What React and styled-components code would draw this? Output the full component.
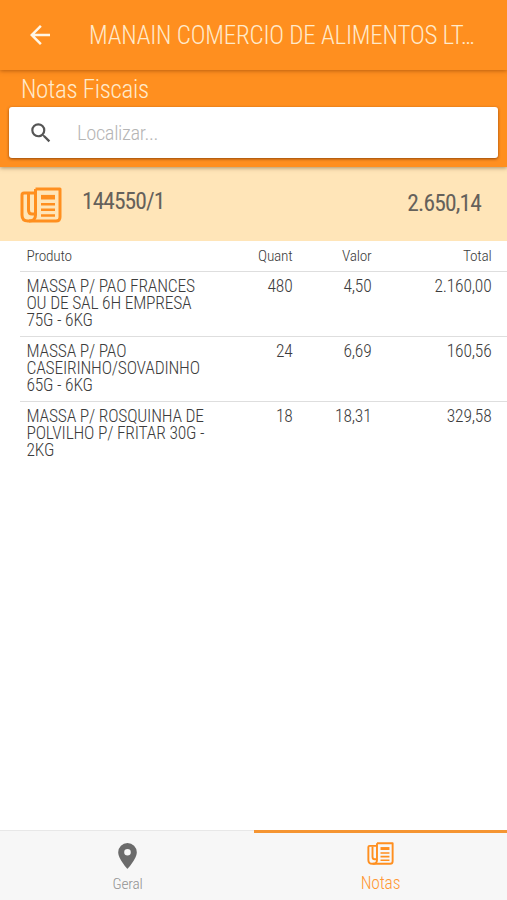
import styled, { createGlobalStyle } from "styled-components";

const GlobalStyle = createGlobalStyle`
    * {
        box-sizing: border-box;
    }

    body {
        margin: 0;
        background: #fff;
        font-family: "Roboto Condensed", Roboto, "Liberation Sans Narrow", sans-serif;
        font-stretch: 75%;
        font-weight: 300;
        color: #3c3c3c;
    }
`

const Screen = styled('div')`
    height: 900px;
    display: flex;
    flex-direction: column;
    overflow: hidden;
`

const TopBar = styled('header')`
    position: relative;
    z-index: 2;
    display: flex;
    align-items: center;
    height: 70px;
    flex-shrink: 0;
    padding-left: 25px;
    background: #ff8f1f;
    box-shadow: 0 1px 4px rgba(120, 50, 0, 0.5);
    color: #ffeacb;

    svg {
        width: 30px;
        height: 30px;
        fill: #fff6e6;
    }
`

const Title = styled('h1')`
    margin: 2px 0 0 34px;
    font-size: 25px;
    font-weight: 300;
    letter-spacing: -0.2px;
    line-height: 30px;
    white-space: nowrap;
`

const SearchArea = styled('section')`
    position: relative;
    height: 97px;
    flex-shrink: 0;
    padding: 5px 9px 0;
    background: #ff8f1f;
    box-shadow: 0 1px 4px rgba(90, 60, 20, 0.5);
`

const Subtitle = styled('h2')`
    margin: 0 0 3px 12px;
    font-size: 25px;
    font-weight: 300;
    letter-spacing: -0.3px;
    line-height: 29px;
    color: #ffeacb;
`

const SearchBox = styled('label')`
    display: flex;
    align-items: center;
    height: 51px;
    padding-left: 19px;
    border-radius: 3px;
    background: #fff;
    box-shadow: 0 1px 3px rgba(100, 40, 0, 0.7);

    svg {
        width: 26px;
        height: 26px;
        fill: #555;
    }

    input {
        flex: 1;
        margin-left: 23px;
        padding: 0;
        border: none;
        outline: none;
        font: inherit;
        font-size: 20.5px;
        letter-spacing: -0.35px;
    }

    input::placeholder {
        color: #b5b5b5;
    }
`

const Invoice = styled('div')`
    display: flex;
    height: 74px;
    flex-shrink: 0;
    padding: 20px 25px 0 20px;
    background: #ffe5b8;
    color: #65615b;
    font-size: 23.5px;
    font-weight: 400;
    letter-spacing: -0.95px;
    line-height: 28px;
`

const InvoiceNumber = styled('span')`
    margin-left: 20px;
`

const InvoiceTotal = styled('span')`
    margin: 2px 1px 0 auto;
    letter-spacing: -0.85px;
`

const Row = styled('div')`
    display: grid;
    grid-template-columns: 186px 80px 79px 120px;
    height: ${p => p.$head ? '31px' : '65px'};
    margin-left: 20px;
    padding: ${p => p.$head ? '7px 0 0 6.5px' : '6px 0 0 6.5px'};
    border-bottom: ${p => p.$last ? 'none' : '1px solid #dedede'};
    font-size: ${p => p.$head ? '15.4px' : '17.5px'};
    letter-spacing: ${p => p.$head ? '-0.25px' : '-0.2px'};
    line-height: 17.1px;
`

const Cell = styled('span')`
    text-align: ${p => p.$right ? 'right' : 'left'};
`

const Tabs = styled('nav')`
    display: flex;
    height: 70px;
    flex-shrink: 0;
    margin-top: auto;
    background: #f7f7f7;
`

const Tab = styled('div')`
    flex: 1;
    display: flex;
    flex-direction: column;
    align-items: center;
    border-top: ${p => p.$active ? '3px solid #f59532' : '1px solid #e8e8e8'};
    padding-top: ${p => p.$active ? '5px' : '9px'};
    padding-left: ${p => p.$active ? '0' : '1px'};
    color: ${p => p.$active ? '#ff9733' : '#929292'};
    font-size: ${p => p.$active ? '17.5px' : '15.4px'};
    letter-spacing: -0.2px;
    line-height: 20px;
`

const TabIcon = styled('div')`
    display: flex;
    align-items: center;
    justify-content: center;
    height: 31px;
    margin-bottom: ${p => p.$gap};
`

function PaperIcon({ width, height, strokeWidth }) {
    return (
        <svg width={width} height={height} viewBox="0 0 42 36" fill="none" stroke="#ff8f1f" strokeWidth={strokeWidth} strokeLinejoin="round">
            <path d="M15.5 2H40V30Q40 34 36 34H8Q2 34 2 28V8Q2 6 4 6H15.5" />
            <path d="M15.5 2V28Q15.5 34 9 34" />
            <path d="M8.5 7V23Q8.5 27 12 27H15" />
            <path d="M21 10.2H35" strokeWidth="4.6" />
            <path d="M21 17.2H35M21 22.8H35M21 28.5H35" strokeWidth="2.6" />
        </svg>
    )
}

const items = [
    { name: 'MASSA P/ PAO FRANCES OU DE SAL 6H EMPRESA 75G - 6KG', quant: '480', valor: '4,50', total: '2.160,00' },
    { name: 'MASSA P/ PAO CASEIRINHO/SOVADINHO 65G - 6KG', quant: '24', valor: '6,69', total: '160,56' },
    { name: 'MASSA P/ ROSQUINHA DE POLVILHO P/ FRITAR 30G - 2KG', quant: '18', valor: '18,31', total: '329,58' },
]

export default function App() {
    return (
        <Screen>
            <GlobalStyle />

            <TopBar>
                <svg viewBox="0 0 24 24">
                    <path d="M20 11H7.83l5.59-5.59L12 4l-8 8 8 8 1.41-1.41L7.83 13H20v-2z" />
                </svg>
                <Title>MANAIN COMERCIO DE ALIMENTOS LT…</Title>
            </TopBar>

            <SearchArea>
                <Subtitle>Notas Fiscais</Subtitle>
                <SearchBox>
                    <svg viewBox="0 0 24 24">
                        <path d="M15.5 14h-.79l-.28-.27A6.47 6.47 0 0 0 16 9.5 6.5 6.5 0 1 0 9.5 16c1.61 0 3.09-.59 4.23-1.57l.27.28v.79l5 4.99L20.49 19l-4.99-5zm-6 0a4.5 4.5 0 1 1 0-9 4.5 4.5 0 0 1 0 9z" />
                    </svg>
                    <input placeholder="Localizar..." />
                </SearchBox>
            </SearchArea>

            <Invoice>
                <PaperIcon width="42" height="36" strokeWidth="3" />
                <InvoiceNumber>144550/1</InvoiceNumber>
                <InvoiceTotal>2.650,14</InvoiceTotal>
            </Invoice>

            <Row $head>
                <Cell>Produto</Cell>
                <Cell $right>Quant</Cell>
                <Cell $right>Valor</Cell>
                <Cell $right>Total</Cell>
            </Row>

            {items.map((item, i) => (
                <Row key={item.name} $last={i === items.length - 1}>
                    <Cell>{item.name}</Cell>
                    <Cell $right>{item.quant}</Cell>
                    <Cell $right>{item.valor}</Cell>
                    <Cell $right>{item.total}</Cell>
                </Row>
            ))}

            <Tabs>
                <Tab>
                    <TabIcon $gap="3px">
                        <svg width="19" height="26" viewBox="0 0 19 26" fill="#6b6b6b" fillRule="evenodd">
                            <path d="M9.5 0A9.3 9.3 0 0 0 .2 9.3C.2 16 9.5 26 9.5 26s9.3-10 9.3-16.7A9.3 9.3 0 0 0 9.5 0zm0 12.6a3.3 3.3 0 1 1 0-6.6 3.3 3.3 0 0 1 0 6.6z" />
                        </svg>
                    </TabIcon>
                    Geral
                </Tab>
                <Tab $active>
                    <TabIcon $gap="4px">
                        <PaperIcon width="27" height="23" strokeWidth="3" />
                    </TabIcon>
                    Notas
                </Tab>
            </Tabs>
        </Screen>
    )
}
